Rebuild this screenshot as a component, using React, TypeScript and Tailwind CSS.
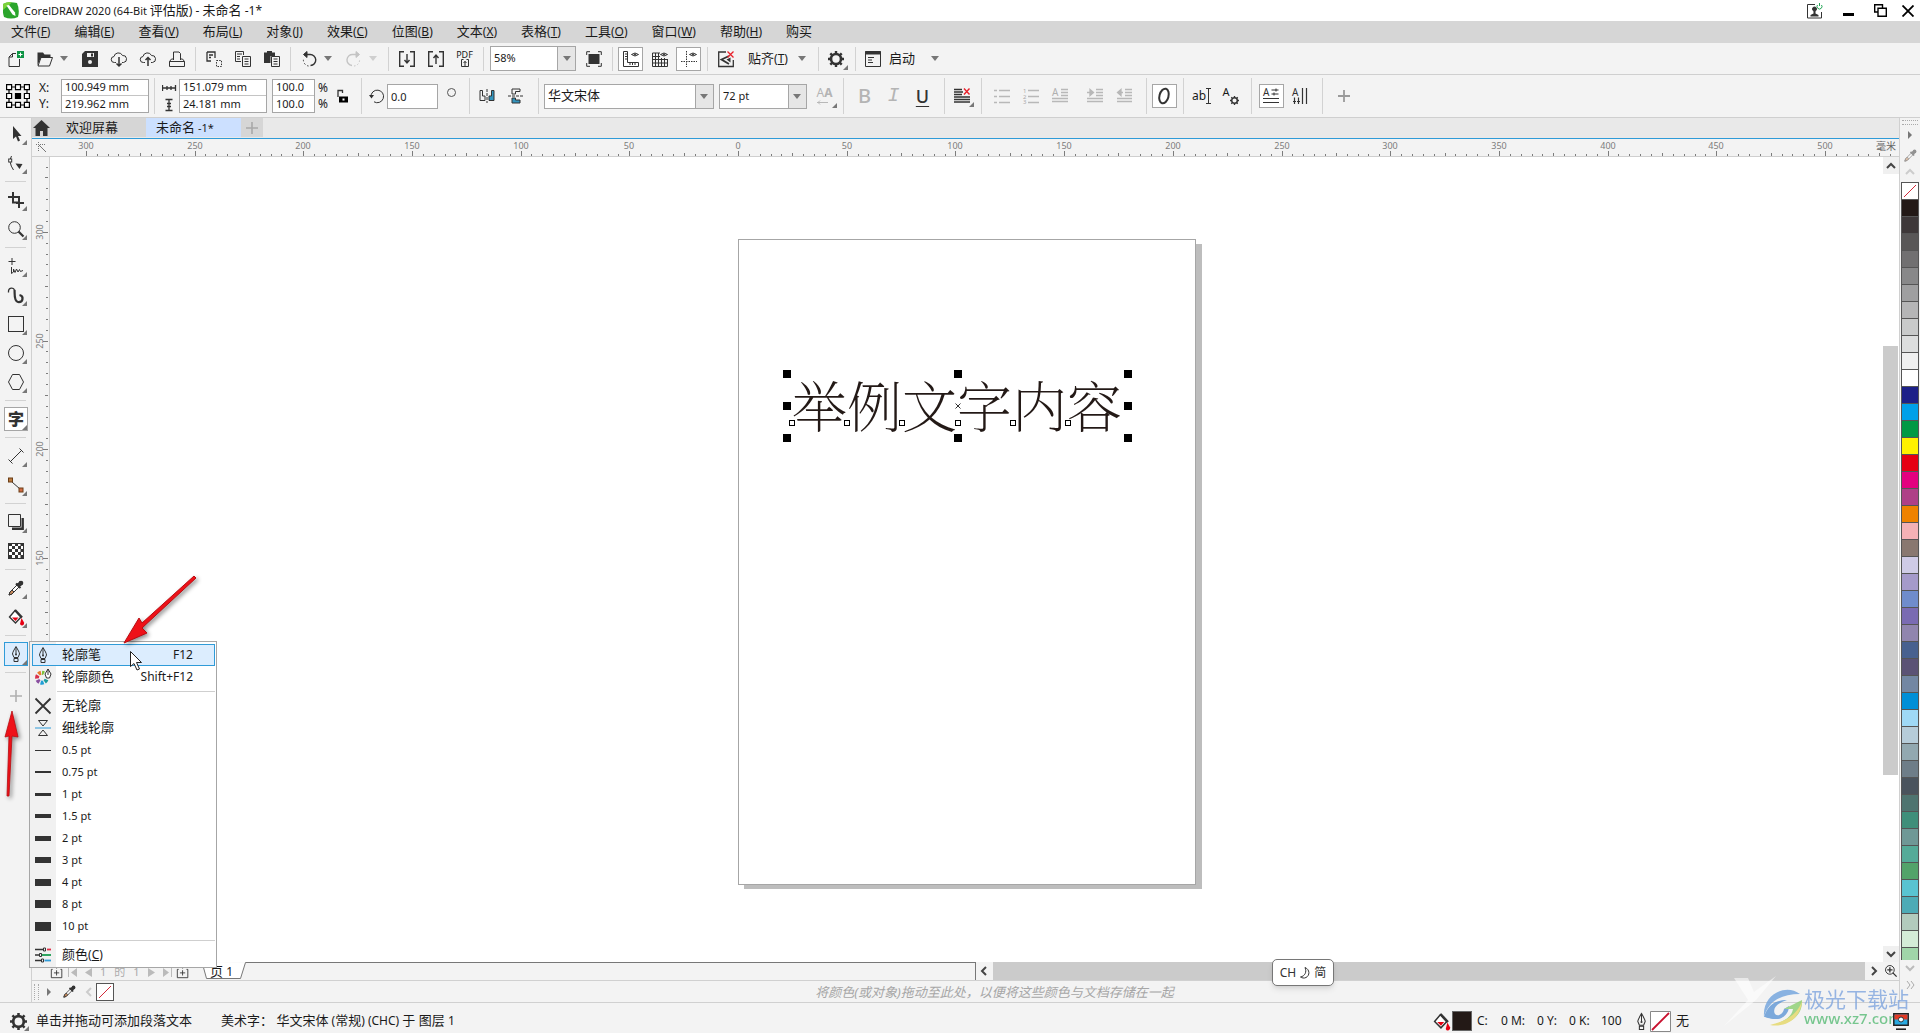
import { useState } from 'react';
import type { ReactNode } from 'react';
import clsx from 'clsx';

const INK = '#333333';

function Svg({ children, size = 16, className }: { children: ReactNode; size?: number; className?: string }) {
  return (
    <svg width={size} height={size} viewBox="0 0 16 16" fill="none" stroke={INK} strokeWidth="1" className={clsx('shrink-0 overflow-visible', className)} aria-hidden="true">
      {children}
    </svg>
  );
}

const penNib = (
  <>
    <path d="M8 .5 C6 4 4.500 6.500 4.500 8 L6 11.500 H10 L11.500 8 C11.500 6.500 10 4 8 .5Z" />
    <path d="M8 1v7" />
    <circle cx="8" cy="8.500" r="1" fill={INK} stroke="none" />
    <path d="M6 12.500h4v3H6z" />
  </>
);

const dropper = (
  <>
    <path d="M1 15 L2 12 L9 5 L11 7 L4 14 Z" fill="#fff" />
    <path d="M1 15 L2 12 L4 10 L6 12 L4 14 Z" fill="#c98a5a" />
    <path d="M8 3.500 L12.500 8 M9.500 5 L12 2.500 L13.500 4 L11 6.500Z" stroke={INK} strokeWidth="2" />
    <circle cx="13" cy="3" r="2.300" fill={INK} stroke="none" />
  </>
);

const bucket = (
  <>
    <path d="M7 1.500 L13 8 L7.500 14 L1.500 8 Z" fill="#fff" strokeWidth="1.400" />
    <path d="M7 1 L14 8.500" strokeWidth="2.400" />
    <path d="M4 8.500h6.500L7.500 12z" fill="#e60012" stroke="none" />
    <path d="M13.500 9 L16 13.500 a2 2 0 0 1 -4 1.500z" fill="#e60012" stroke="none" />
  </>
);

const gear = (
  <>
    <circle cx="8" cy="8" r="5" strokeWidth="2.600" />
    <path d="M8 0v3M8 13v3M0 8h3M13 8h3M2.300 2.300l2 2M11.700 11.700l2 2M13.700 2.300l-2 2M4.300 11.700l-2 2" strokeWidth="2.400" />
  </>
);

const eye = (
  <>
    <path d="M8.500 3.500 Q12 .5 15.500 3.500 Q12 6.500 8.500 3.500Z" />
    <circle cx="12" cy="3.500" r="1" fill={INK} stroke="none" />
  </>
);

const icons = {
  new: (
    <>
      <path d="M8 2.500H4.500L1 6v9.500h10.500V8" />
      <path d="M4.500 2.500V6H1" />
      <rect x="9" y="0" width="7" height="7" fill="#0d9444" stroke="none" />
      <path d="M12.500 1.500v4M10.500 3.500h4" stroke="#fff" />
    </>
  ),
  open: (
    <>
      <path d="M1 15 L4 6.500 H15.500 L12.500 15Z" />
      <path d="M.5 14.500V1.500h5.500l1.500 2H13.500v3H4z" fill={INK} stroke="none" />
    </>
  ),
  save: (
    <>
      <path d="M0 3 L3 0 H16 V16 H0Z" fill={INK} stroke="none" />
      <rect x="5" y="2" width="7" height="4" fill="#f3f3f3" stroke="none" />
      <rect x="9" y="2.500" width="2" height="3" fill={INK} stroke="none" />
      <circle cx="8" cy="11" r="2" fill="#f3f3f3" stroke="none" />
    </>
  ),
  cloudDown: (
    <>
      <path d="M5 11.500H3.500a3 3 0 0 1 -.5-6 A4.500 4.500 0 0 1 11.500 4.500 A3.500 3.500 0 0 1 12.500 11.500H11" />
      <path d="M8 6v9M5.500 12.500L8 15l2.500-2.500" strokeWidth="1.500" />
    </>
  ),
  cloudUp: (
    <>
      <path d="M5 11.500H3.500a3 3 0 0 1 -.5-6 A4.500 4.500 0 0 1 11.500 4.500 A3.500 3.500 0 0 1 12.500 11.500H11" />
      <path d="M8 15V6.500M5.500 9L8 6.500l2.500 2.500" strokeWidth="1.500" />
    </>
  ),
  print: (
    <>
      <path d="M4.500 9V1H10l1.500 1.500V9" />
      <path d="M4.500 8H2.500L.5 10.500v5h15v-5L13.500 8h-2M.5 10.500h15" />
    </>
  ),
  cut: (
    <>
      <path d="M1 1h8v6M1 1v9h4M3 4h4M3 6.500h2" strokeWidth="1.300" />
      <path d="M10.500 9.500h5v6h-5z" strokeDasharray="1.500 1.200" />
    </>
  ),
  copy: (
    <>
      <path d="M6 10.500H.5V.5h8V4M2 3h5M2 5.500h3M2 8h3" />
      <path d="M7.500 5.500h8v10h-8zM9.500 8h4M9.500 10.500h4M9.500 13h4" />
    </>
  ),
  paste: (
    <>
      <path d="M0 1.500h3V0h5v1.500h3V5H6.500v7H0z" fill={INK} stroke="none" />
      <path d="M7.500 5.500h8v10h-8zM9.500 8h4M9.500 10.500h4M9.500 13h4" />
    </>
  ),
  undo: (
    <>
      <path d="M4 3.500 H9 A5.500 5.500 0 0 1 9.500 14.500" strokeWidth="1.400" />
      <path d="M7.500 15 A6 6 0 0 1 2.500 8" strokeDasharray="1.500 2" />
      <path d="M6 .5L2.500 3.500 6 6.500z" fill={INK} />
    </>
  ),
  redo: (
    <g stroke="#c4c4c4">
      <path d="M11.500 3.500 H7 A5.500 5.500 0 0 0 6 14.500" strokeWidth="1.400" />
      <path d="M8 15 A6 6 0 0 0 13.500 8" strokeDasharray="1.500 2" />
      <path d="M10 .5L13.500 3.500 10 6.500z" fill="#c4c4c4" />
    </g>
  ),
  import: <path d="M5 .7H.7v14.600H5M11 .7h4.300v14.600H11M8 3v9M5.500 9L8 12l2.500-3" strokeWidth="1.400" />,
  export: <path d="M5 .7H.7v14.600H5M11 .7h4.300v14.600H11M8 13V4M5.500 7L8 4l2.500 3" strokeWidth="1.400" />,
  fullscreen: (
    <>
      <rect x="2.500" y="3" width="11" height="10" fill={INK} stroke="none" />
      <path d="M4 .7H.7V4M12 .7h3.300V4M4 15.300H.7V12M12 15.300h3.300V12" />
    </>
  ),
  rulers: (
    <>
      <path d="M.5.5h4v11h11v4H.5zM2 3h2M2 5.500h2M2 8h2M7 14v-2M9.500 14v-2M12 14v-2" />
      {eye}
    </>
  ),
  grid: (
    <>
      <path d="M.5 2v13.500h15V8M.5 2H8M3.500 2v13.500M6.500 2v13.500M9.500 7v8.500M12.500 7v8.500M.5 5.500H8M.5 8.500h15M.5 12h15" />
      {eye}
    </>
  ),
  guides: (
    <>
      <path d="M5.500 0v16M0 10.500h16" strokeDasharray="1.500 1" />
      {eye}
    </>
  ),
  snapOff: (
    <>
      <path d="M8 1H.7v14.500h14.600V9" strokeWidth="1.300" />
      <path d="M11 5L3.500 8.500 11 13" strokeWidth="1.800" />
      <path d="M8.500 8.500l4-2v5z" fill={INK} stroke="none" />
      <path d="M9.500.5l6 6M15.500.5l-6 6" stroke="#e8202a" strokeWidth="1.300" />
    </>
  ),
  gear,
  launch: (
    <>
      <path d="M.5.5h15v15H.5z" />
      <path d="M0 2h16" strokeWidth="3" />
      <path d="M3 6.500h6M3 9h4M3 11.500h5" />
    </>
  ),
  lock: (
    <>
      <path d="M4 9V2.500h4.500V5" strokeWidth="1.300" />
      <rect x="5" y="8.500" width="9" height="6" fill="#000" stroke="none" />
      <rect x="8.500" y="10.500" width="2" height="2" fill="#fff" stroke="none" />
    </>
  ),
  rotate: (
    <>
      <path d="M2 9 A6.300 6.300 0 1 1 5 13.800" />
      <path d="M0 7h5L2.500 10.500z" fill={INK} stroke="none" />
    </>
  ),
  mirrorH: (
    <>
      <path d="M1 2.500h2.500v5.500H6v4.500H1z" />
      <path d="M8 1v14" strokeDasharray="3 1" />
      <path d="M15 2.500h-2.500v5.500H10v4.500h5z" fill="#3394bd" />
    </>
  ),
  mirrorV: (
    <>
      <path d="M12 1H4v5h3.500V3.500H12z" />
      <path d="M0 8h16" strokeDasharray="3 1" />
      <path d="M4 10v5h8v-3H7.500v-2z" fill="#3394bd" />
    </>
  ),
  align: (
    <>
      <path d="M0 1.500h8M0 4h9M0 6.500h8M0 9h16M0 11.500h16M0 14h16" strokeWidth="1.500" />
      <path d="M10 .5l5.500 6M15.500.5l-5.500 6" stroke="#e8202a" strokeWidth="1.400" />
    </>
  ),
  bullets: <path d="M0 2.500h3M0 8.500h3M0 14.500h3M5 2.500h11M5 8.500h11M5 14.500h11" stroke="#b8b8b8" strokeWidth="1.400" />,
  numbers: (
    <>
      <path d="M5 2.500h11M5 8.500h11M5 14.500h11" stroke="#b8b8b8" strokeWidth="1.400" />
      <g fontSize="6" fill="#aaa" stroke="none">
        <text x="0" y="5">1</text>
        <text x="0" y="10.500">2</text>
        <text x="0" y="16">3</text>
      </g>
    </>
  ),
  dropCap: (
    <>
      <path d="M9 1.500h7M9 4.500h7M9 7.500h7M0 10.500h16M0 13.500h16" stroke="#b8b8b8" strokeWidth="1.300" />
      <text x="0" y="8" fontSize="10" fill="#b0b0b0" stroke="none">A</text>
    </>
  ),
  indent: (
    <g stroke="#b8b8b8" strokeWidth="1.300">
      <path d="M9 1.500h7M9 4.500h7M9 7.500h7M0 10.500h16M0 13.500h16" />
      <path d="M0 4.500h6M3 1.500l3.500 3L3 7.500z" fill="#b8b8b8" />
    </g>
  ),
  outdent: (
    <g stroke="#b8b8b8" strokeWidth="1.300">
      <path d="M9 1.500h7M9 4.500h7M9 7.500h7M1 10.500h15M1 13.500h15" />
      <path d="M7 4.500H2M5 1.500l-3.500 3 3.500 3z" fill="#b8b8b8" />
    </g>
  ),
  openType: <ellipse cx="8" cy="8" rx="4.500" ry="7.500" transform="rotate(15 8 8)" strokeWidth="2" />,
  horizontal: (
    <>
      <text x="0" y="8" fontSize="10" fill={INK} stroke="none">A</text>
      <path d="M8.500 2h7M8.500 6h7M0 10.500h16M0 14.500h16" strokeWidth="1.200" />
      <path d="M13 .5v3M11 4.500v3" />
    </>
  ),
  vertical: (
    <>
      <text x="0" y="8" fontSize="10" fill={INK} stroke="none">A</text>
      <path d="M2.500 9.500V16M6.500 9.500V16M10.500 0v16M14.500 0v16" strokeWidth="1.200" />
      <path d="M1 13.500h3M5 13.500h3" />
    </>
  ),
  pick: <path d="M5 0v13l3-2.500 2 5 2-1-2-4.500h3.500z" fill={INK} stroke="none" />,
  shape: (
    <>
      <path d="M3.500 1 Q0 7 5.500 15" />
      <rect x=".7" y="4" width="3" height="3" fill="#fff" />
      <path d="M7.500 8.500l7 .5-3 5z" fill={INK} stroke="none" />
    </>
  ),
  crop: <path d="M5 0v10.500h3M0 5h5M8 5h3v11M8 11h8M5 5h5M6 10.500h5" strokeWidth="2" />,
  zoom: (
    <>
      <circle cx="6.500" cy="6.500" r="5.800" />
      <path d="M10.500 10.500l5 5" strokeWidth="2.200" />
    </>
  ),
  freehand: (
    <>
      <path d="M4 0v7M.5 3.500h7" />
      <path d="M3.500 9v6.500l2-1.500v-3l1.500 3.500 1.500-3.500 1.500 3 1.500-2.500 1 2 2.500-1" />
    </>
  ),
  artistic: (
    <>
      <path d="M.5 5.500C0 0 6 0 6.500 3.500" strokeWidth="1.300" />
      <path d="M6.500 3C7 6 5.500 14 10 15 15.500 15.500 16 9 11.500 8" strokeWidth="2.200" />
    </>
  ),
  rect: <rect x=".5" y=".5" width="15" height="15" />,
  ellipse: <circle cx="8" cy="8" r="7.500" />,
  polygon: <path d="M4.500 .5h7L15.500 8l-4 7.500h-7L.5 8z" />,
  text: <text x="8" y="14" fontSize="16" fontWeight="900" textAnchor="middle" fill={INK} stroke="none">字</text>,
  dimension: <path d="M2.500 13.500L13.500 2.500M.5 11.500l4 4M11.500.5l4 4" />,
  connector: (
    <>
      <path d="M4 5l8 7" />
      <rect x=".5" y="1" width="4" height="4" fill="#b9793f" stroke="#6b3e16" />
      <rect x="11" y="11" width="4" height="4" fill="#d06a44" stroke="#6b3e16" />
    </>
  ),
  shadow: (
    <>
      <path d="M.5.500h12v12H.5z" />
      <path d="M14.700 4v10.700H4" strokeWidth="2.400" />
    </>
  ),
  transparency: (
    <>
      <rect x=".5" y=".5" width="15" height="15" fill="#fff" />
      <path d="M2.500 0v16M8.500 0v16M14 0v16" stroke={INK} strokeWidth="3" strokeDasharray="3 3" />
      <path d="M5.500 3v13M11.500 3v13" stroke={INK} strokeWidth="3" strokeDasharray="3 3" />
    </>
  ),
  dropper,
  bucket,
  penNib,
  colorPen: (
    <>
      <g strokeWidth="4">
        <path d="M6 3.800A5 5 0 0 0 3.500 5.200" stroke="#e8792b" />
        <path d="M2.700 6.200A5 5 0 0 0 2 9.500" stroke="#d9304b" />
        <path d="M2.500 10.800A5 5 0 0 0 4.500 13" stroke="#8a4fa0" />
        <path d="M5.600 13.500A5 5 0 0 0 8.600 13.400" stroke="#1f9fd8" />
        <path d="M9.700 12.800A5 5 0 0 0 11.500 10.500" stroke="#1a9c9c" />
        <path d="M7 3.700A5 5 0 0 1 9 4.300" stroke="#7bbf3a" />
      </g>
      <path d="M13 0L10 5l1.500 4h3L16 5z" fill="#fff" />
      <path d="M13 0v6" />
    </>
  ),
  none: <path d="M.5.5l15 15M15.500.5l-15 15" strokeWidth="1.800" />,
  hairline: (
    <>
      <path d="M3.500.5h9L8 6zM3.500 15.500h9L8 10z" />
      <path d="M0 8h16" stroke="#2f9bd8" />
    </>
  ),
  sliders: (
    <>
      <path d="M0 2.500h8M0 8h4M0 13.500h6" strokeWidth="1.600" />
      <path d="M12 2.500h4" stroke="#e0304a" strokeWidth="1.800" />
      <path d="M7 8h9" stroke="#1a9c50" strokeWidth="1.800" />
      <path d="M9.500 13.500H16" stroke="#2f9bd8" strokeWidth="1.800" />
      <path d="M8.500 1h2v3h-2zM4.500 6.500h2v3h-2zM6.500 12h2v3h-2z" />
    </>
  ),
  addPage: (
    <>
      <path d="M3 5H1.500v9.500h12V5H12M7.500 1v3" strokeWidth="1" />
      <path d="M7.500 6v6M4.500 9h6" />
    </>
  ),
};

type IconName = keyof typeof icons;

function Separator({ tall = false }: { tall?: boolean }) {
  return <span className={clsx('ml-1 mr-[3px] w-px shrink-0 bg-[#d2d2d2]', tall ? 'h-9' : 'h-6')} />;
}

function ToolButton({ icon, label, active = false, flyout = false }: { icon: IconName; label: string; active?: boolean; flyout?: boolean }) {
  return (
    <button
      type="button"
      aria-label={label}
      className={clsx('relative mx-[2px] flex h-6 w-[25px] shrink-0 items-center justify-center border', active ? 'border-[#a6a6a6] bg-white' : 'border-transparent')}
    >
      <Svg>{icons[icon]}</Svg>
      {flyout && <Flyout />}
    </button>
  );
}

function LetterButton({ label, className, children }: { label: string; className: string; children: ReactNode }) {
  return (
    <button type="button" aria-label={label} className={clsx('relative mx-[2px] flex h-6 w-[25px] shrink-0 items-center justify-center leading-none', className)}>
      {children}
    </button>
  );
}

function Flyout() {
  return (
    <svg width="5" height="5" viewBox="0 0 5 5" className="absolute bottom-0 right-0" aria-hidden="true">
      <path d="M5 0v5H0z" fill="#777" />
    </svg>
  );
}

function Caret({ muted = false }: { muted?: boolean }) {
  return (
    <svg width="8" height="5" viewBox="0 0 8 5" className="shrink-0" aria-hidden="true">
      <path d="M0 0h8L4 5z" fill={muted ? '#cfcfcf' : '#777'} />
    </svg>
  );
}

function CaretButton({ label, muted = false }: { label: string; muted?: boolean }) {
  return (
    <button type="button" aria-label={label} className="flex h-6 w-4 shrink-0 items-center pl-px">
      <Caret muted={muted} />
    </button>
  );
}

function Combo({ label, value, className }: { label: string; value: string; className: string }) {
  return (
    <div className={clsx('relative flex h-[25px] shrink-0 border border-[#a6a6a6] bg-white', className)}>
      <select aria-label={label} defaultValue={value} className="w-full appearance-none bg-transparent pl-[3px]">
        <option>{value}</option>
      </select>
      <span className="pointer-events-none absolute inset-y-0 right-0 flex w-[18px] items-center justify-center border-l border-[#a6a6a6] bg-[#e6e6e6]">
        <Caret />
      </span>
    </div>
  );
}

function FieldPair({ labels, values, className }: { labels: string[]; values: string[]; className: string }) {
  return (
    <div className={clsx('flex shrink-0 flex-col border border-[#a6a6a6] bg-white text-[11px]', className)}>
      {values.map((value, i) => (
        <input key={labels[i]} aria-label={labels[i]} defaultValue={value} className={clsx('h-4 w-full px-[3px] outline-none', i === 0 && 'border-b border-[#c4c4c4]')} />
      ))}
    </div>
  );
}

const menus = [
  ['文件', 'F'], ['编辑', 'E'], ['查看', 'V'], ['布局', 'L'], ['对象', 'J'], ['效果', 'C'], ['位图', 'B'],
  ['文本', 'X'], ['表格', 'T'], ['工具', 'O'], ['窗口', 'W'], ['帮助', 'H'], ['购买', ''],
];

function Mnemonic({ text, letter }: { text: string; letter: string }) {
  return (
    <>
      {text}
      {letter && <span className="text-[12px]">(<u>{letter}</u>)</span>}
    </>
  );
}

function TitleBar() {
  return (
    <header className="flex h-[21px] shrink-0 items-center bg-white pl-[3px] pr-[6px]">
      <svg width="16" height="17" viewBox="0 0 16 17" aria-hidden="true">
        <path d="M0 2Q5-1 14 1 17 8 15 15 8 18 1 15-1 8 0 2z" fill="#2ba52c" />
        <path d="M0 8Q-.5 4 0 2 5-1 9 .5z" fill="#7bd13b" />
        <path d="M3.500 3.500l6 9 3 1.500-.5-3.500-6-7.500z" fill="#fff" />
      </svg>
      <h1 className="ml-[5px] text-[13px] leading-5">
        <span className="text-[11px]">CorelDRAW 2020 (64-Bit </span>评估版<span className="text-[12px]">) - </span>未命名<span className="text-[12px]"> -1*</span>
      </h1>
      <div className="ml-auto flex items-center">
        <button type="button" aria-label="登录" className="mr-[20px]">
          <Svg>
            <path d="M8 1.500H.5v13.500h14V9" />
            <circle cx="7.500" cy="6" r="2" fill={INK} />
            <path d="M6.500 8h2v2.500l3 1.500v1.500h-8V12l3-1.500z" fill={INK} stroke="none" />
            <path d="M10.500 2a2.500 2.500 0 1 0 4 0M12.500 0v3" stroke="#27a85a" />
          </Svg>
        </button>
        <button type="button" aria-label="最小化" className="mr-[20px] mt-2 h-[3px] w-[11px] bg-black" />
        <button type="button" aria-label="还原" className="mr-[15px]">
          <svg width="13" height="13" viewBox="0 0 13 13" fill="none" stroke="#000" strokeWidth="1.400" aria-hidden="true">
            <path d="M4 8H.7V.7H8.500V4M4 4.300h8.300v8H4z" />
          </svg>
        </button>
        <button type="button" aria-label="关闭">
          <svg width="12" height="12" viewBox="0 0 12 12" stroke="#000" strokeWidth="1.800" aria-hidden="true">
            <path d="M.5.5l11 11M11.500.5l-11 11" />
          </svg>
        </button>
      </div>
    </header>
  );
}

function StandardBar() {
  return (
    <div className="flex h-8 shrink-0 items-center border-b border-[#cfcfcf] pl-px">
      <ToolButton icon="new" label="新建" />
      <ToolButton icon="open" label="打开" />
      <CaretButton label="最近文件" />
      <ToolButton icon="save" label="保存" />
      <ToolButton icon="cloudDown" label="从云端打开" />
      <ToolButton icon="cloudUp" label="保存到云端" />
      <ToolButton icon="print" label="打印" />
      <Separator />
      <ToolButton icon="cut" label="剪切" />
      <ToolButton icon="copy" label="复制" />
      <ToolButton icon="paste" label="粘贴" />
      <Separator />
      <ToolButton icon="undo" label="撤销" />
      <CaretButton label="撤销列表" />
      <ToolButton icon="redo" label="重做" />
      <CaretButton label="重做列表" muted />
      <Separator />
      <ToolButton icon="import" label="导入" />
      <ToolButton icon="export" label="导出" />
      <button type="button" className="flex w-[29px] shrink-0 flex-col items-center text-[9px] leading-[9px]">
        PDF
        <svg width="8" height="8" viewBox="0 0 8 8" fill="none" stroke={INK} aria-hidden="true">
          <path d="M2.500.5h-2v7h7v-7h-2M4 7V2M2.500 4L4 2.500 5.500 4" />
        </svg>
      </button>
      <Separator />
      <Combo label="缩放级别" value="58%" className="mx-[3px] w-[86px] text-[11px]" />
      <ToolButton icon="fullscreen" label="全屏预览" />
      <Separator />
      <ToolButton icon="rulers" label="显示标尺" active />
      <ToolButton icon="grid" label="显示网格" />
      <ToolButton icon="guides" label="显示辅助线" active />
      <Separator />
      <ToolButton icon="snapOff" label="关闭贴齐" />
      <button type="button" className="flex shrink-0 items-center gap-[10px] px-2 text-[13px]">
        <span><Mnemonic text="贴齐" letter="T" /></span>
        <Caret />
      </button>
      <Separator />
      <ToolButton icon="gear" label="选项" flyout />
      <Separator />
      <button type="button" className="flex shrink-0 items-center pl-[6px] text-[13px]">
        <Svg>{icons.launch}</Svg>
        <span className="ml-2 mr-4">启动</span>
        <Caret />
      </button>
    </div>
  );
}

function PropertyBar() {
  return (
    <div className="flex h-[43px] shrink-0 items-center border-b border-[#cfcfcf] pl-[6px]">
      <button type="button" aria-label="对象原点" className="mr-[9px] shrink-0">
        <svg width="24" height="24" viewBox="0 0 24 24" fill="#fff" stroke="#000" strokeWidth="1.200" aria-hidden="true">
          <path d="M3 3h18v18H3z" fill="none" />
          <path d="M.600.600h5v5h-5zM9.500.600h5v5h-5zM18.400.600h5v5h-5zM.600 9.500h5v5h-5zM18.400 9.500h5v5h-5zM.600 18.400h5v5h-5zM9.500 18.400h5v5h-5zM18.400 18.400h5v5h-5z" />
          <path d="M9.500 9.500h5v5h-5z" fill="#000" />
        </svg>
      </button>
      <div className="w-[22px] shrink-0 text-[12px] leading-4">
        <div>X:</div>
        <div>Y:</div>
      </div>
      <FieldPair labels={['X 位置', 'Y 位置']} values={['100.949 mm', '219.962 mm']} className="mr-px w-[88px]" />
      <Separator tall />
      <svg width="15" height="34" viewBox="0 0 15 34" fill="none" stroke={INK} className="ml-[4px] mr-[2px] shrink-0" aria-hidden="true">
        <path d="M.5 6v6M13.500 6v6M1 9h12M5 7v4M9 7v4M3.500 20.500h7M3.500 31.500h7M7 21v10M5 24.500h4M5 27.500h4" strokeWidth="1.300" />
      </svg>
      <FieldPair labels={['宽度', '高度']} values={['151.079 mm', '24.181 mm']} className="mr-[5px] w-[88px]" />
      <FieldPair labels={['水平缩放', '垂直缩放']} values={['100.0', '100.0']} className="mr-[3px] w-[43px]" />
      <div className="shrink-0 text-[12px] leading-4">
        <div>%</div>
        <div>%</div>
      </div>
      <ToolButton icon="lock" label="锁定比率" />
      <Separator tall />
      <div className="ml-1 mr-[2px] shrink-0"><Svg>{icons.rotate}</Svg></div>
      <input aria-label="旋转角度" defaultValue="0.0" className="h-[25px] w-[51px] shrink-0 border border-[#a6a6a6] bg-white px-[3px] text-[11px] outline-none" />
      <span className="mx-[9px] mb-2 h-[9px] w-[9px] shrink-0 rounded-full border border-[#555]" />
      <Separator tall />
      <ToolButton icon="mirrorH" label="水平镜像" />
      <ToolButton icon="mirrorV" label="垂直镜像" />
      <div className="w-[3px]" />
      <Separator tall />
      <Combo label="字体" value="华文宋体" className="ml-[2px] w-[170px] text-[13px]" />
      <Combo label="字号" value="72 pt" className="ml-[5px] mr-[3px] w-[88px] text-[11px]" />
      <LetterButton label="字体大小" className="text-[12px] text-[#b4b4b4]">
        <span className="mb-[6px]">A<span className="font-bold">A</span></span>
        <svg width="12" height="5" viewBox="0 0 12 5" fill="none" stroke="#b8b8b8" className="absolute bottom-[3px] left-[5px]" aria-hidden="true"><path d="M0 2.500h11M3 .5l-2 2 2 2" /></svg>
        <Flyout />
      </LetterButton>
      <Separator tall />
      <div className="w-[3px]" />
      <LetterButton label="粗体" className="text-[20px] font-medium text-[#b4b4b4]">B</LetterButton>
      <LetterButton label="斜体" className="font-['Liberation_Mono',monospace] text-[20px] italic text-[#b4b4b4]">I</LetterButton>
      <LetterButton label="下划线" className="text-[18px] font-medium text-[#333] underline decoration-1 underline-offset-3">U</LetterButton>
      <div className="w-[3px]" />
      <Separator tall />
      <ToolButton icon="align" label="文本对齐" flyout />
      <Separator tall />
      <div className="w-[3px]" />
      <ToolButton icon="bullets" label="项目符号列表" />
      <ToolButton icon="numbers" label="编号列表" />
      <ToolButton icon="dropCap" label="首字下沉" />
      <div className="w-[6px]" />
      <ToolButton icon="indent" label="增加缩进量" />
      <ToolButton icon="outdent" label="减少缩进量" />
      <div className="w-[3px]" />
      <Separator tall />
      <ToolButton icon="openType" label="交互式 OpenType" active />
      <Separator tall />
      <button type="button" aria-label="编辑文本" className="flex w-[29px] shrink-0 items-center justify-center text-[12px]">
        ab
        <svg width="5" height="16" viewBox="0 0 5 16" stroke={INK} fill="none" aria-hidden="true">
          <path d="M0 .5h5M0 15.500h5M2.500 1v14" />
        </svg>
      </button>
      <button type="button" aria-label="文本属性" className="flex w-[29px] shrink-0 items-center justify-center text-[11px]">
        <span className="mb-2">A</span>
        <Svg size={9} className="mt-2">{gear}</Svg>
      </button>
      <div className="w-[2px]" />
      <Separator tall />
      <div className="w-[2px]" />
      <ToolButton icon="horizontal" label="水平方向文本" active />
      <ToolButton icon="vertical" label="垂直方向文本" />
      <div className="w-[3px]" />
      <Separator tall />
      <button type="button" aria-label="自定义" className="ml-3">
        <svg width="12" height="12" viewBox="0 0 12 12" stroke="#9a9a9a" strokeWidth="1.800" aria-hidden="true">
          <path d="M6 0v12M0 6h12" />
        </svg>
      </button>
    </div>
  );
}

const toolGroups: { icon: IconName; label: string; flyout?: boolean }[][] = [
  [{ icon: 'pick', label: '选择' }, { icon: 'shape', label: '形状' }],
  [{ icon: 'crop', label: '裁剪' }, { icon: 'zoom', label: '缩放' }],
  [
    { icon: 'freehand', label: '手绘' },
    { icon: 'artistic', label: '艺术笔' },
    { icon: 'rect', label: '矩形' },
    { icon: 'ellipse', label: '椭圆形' },
    { icon: 'polygon', label: '多边形' },
  ],
  [{ icon: 'text', label: '文本' }],
  [{ icon: 'dimension', label: '平行度量' }, { icon: 'connector', label: '连接器' }],
  [{ icon: 'shadow', label: '阴影' }, { icon: 'transparency', label: '透明度', flyout: false }],
  [{ icon: 'dropper', label: '颜色滴管' }, { icon: 'bucket', label: '交互式填充' }],
  [{ icon: 'penNib', label: '轮廓笔' }],
];

const widths = [
  { label: '0.5 pt', bar: 'h-px' },
  { label: '0.75 pt', bar: 'h-[2px]' },
  { label: '1 pt', bar: 'h-[3px]' },
  { label: '1.5 pt', bar: 'h-1' },
  { label: '2 pt', bar: 'h-[5px]' },
  { label: '3 pt', bar: 'h-[6px]' },
  { label: '4 pt', bar: 'h-[7px]' },
  { label: '8 pt', bar: 'h-2' },
  { label: '10 pt', bar: 'h-[9px]' },
];

function MenuRow({ graphic, children, shortcut, active = false }: { graphic: ReactNode; children: ReactNode; shortcut?: string; active?: boolean }) {
  return (
    <button type="button" role="menuitem" className={clsx('flex h-[22px] w-full items-center border pl-[2px] pr-[21px] text-left', active ? 'border-[#2f9bd8] bg-[#dcedfe]' : 'border-transparent')}>
      <span className="flex w-4 justify-center">{graphic}</span>
      <span className="ml-[11px] flex-1 whitespace-nowrap">{children}</span>
      {shortcut && <span className="text-[12px]">{shortcut}</span>}
    </button>
  );
}

function MenuRule() {
  return (
    <div className="flex h-[7px] items-center pl-[25px]">
      <div className="h-px w-full bg-[#cfcfcf]" />
    </div>
  );
}

function OutlineMenu() {
  return (
    <div role="menu" className="absolute left-[29px] top-[2px] z-20 w-[188px] border border-[#a6a6a6] bg-linear-to-r from-[#f1f1f1] from-[26px] to-white to-[26px] p-px pl-[2px] pt-[2px] text-[13px]">
      <MenuRow graphic={<Svg>{penNib}</Svg>} shortcut="F12" active>轮廓笔</MenuRow>
      <MenuRow graphic={<Svg>{icons.colorPen}</Svg>} shortcut="Shift+F12">轮廓颜色</MenuRow>
      <MenuRule />
      <MenuRow graphic={<Svg>{icons.none}</Svg>}>无轮廓</MenuRow>
      <MenuRow graphic={<Svg>{icons.hairline}</Svg>}>细线轮廓</MenuRow>
      {widths.map((w) => (
        <MenuRow key={w.label} graphic={<span className={clsx('w-4 bg-[#333]', w.bar)} />}>
          <span className="text-[11px]">{w.label}</span>
        </MenuRow>
      ))}
      <MenuRule />
      <MenuRow graphic={<Svg>{icons.sliders}</Svg>}><Mnemonic text="颜色" letter="C" /></MenuRow>
    </div>
  );
}

function Toolbox() {
  const [tool, setTool] = useState('text');

  return (
    <aside className="relative flex w-8 shrink-0 flex-col border-r border-[#d0d0d0] pt-px">
      {toolGroups.map((group, i) => (
        <div key={i} className="shrink-0">
          {i > 0 && <div className="mx-[5px] flex h-2 items-center"><div className="h-px w-full bg-[#d2d2d2]" /></div>}
          {group.map((item) => (
            <div key={item.icon} className="relative flex h-[29px] items-center pl-1">
              <button
                type="button"
                aria-label={item.label}
                onClick={() => setTool(item.icon)}
                className={clsx(
                  'relative flex h-6 w-6 items-center justify-center border',
                  item.icon === 'penNib' ? 'border-[#2f9bd8] bg-[#dcedfe]' : tool === item.icon ? 'border-[#a6a6a6] bg-white' : 'border-transparent',
                )}
              >
                <Svg>{icons[item.icon]}</Svg>
                {item.flyout !== false && <Flyout />}
              </button>
              {item.icon === 'penNib' && <OutlineMenu />}
            </div>
          ))}
        </div>
      ))}
      <div className="mx-[5px] mt-1 h-px bg-[#d2d2d2]" />
      <button type="button" aria-label="自定义工具箱" className="ml-[10px] mt-[17px] w-3">
        <svg width="12" height="12" viewBox="0 0 12 12" stroke="#b0b0b0" strokeWidth="1.600" aria-hidden="true">
          <path d="M6 0v12M0 6h12" />
        </svg>
      </button>
    </aside>
  );
}

const STEP = 10.87;

// Scale marks run every 5 mm, with a number at each 50 mm.
function Ruler({ vertical = false, origin, from, to }: { vertical?: boolean; origin: number; from: number; to: number }) {
  const marks = [];
  for (let n = from; n <= to; n += 1) marks.push(n);
  return (
    <svg className={vertical ? 'h-full w-full' : 'h-full min-w-0 flex-1'} fontSize="9" fontFamily="'Noto Sans', sans-serif" fill="#7c7c7c" stroke="none" role="img" aria-label={vertical ? '垂直标尺' : '水平标尺'}>
      {marks.map((n) => {
        const p = Math.round(origin + n * STEP);
        const major = n % 10 === 0;
        const len = major ? 5 : n % 5 === 0 ? 3 : 2;
        return (
          <g key={n}>
            {vertical ? <rect x={16 - len} y={p} width={len} height="1" /> : <rect x={p} y={17 - len} width="1" height={len} />}
            {major && (
              <text textAnchor="middle" transform={vertical ? `translate(11 ${p}) rotate(-90)` : `translate(${p} 10)`}>
                {Math.abs(n * 5)}
              </text>
            )}
          </g>
        );
      })}
    </svg>
  );
}

const handles = [
  'left-[783px] top-[370px]', 'left-[954px] top-[370px]', 'left-[1124px] top-[370px]',
  'left-[783px] top-[402px]', 'left-[1124px] top-[402px]',
  'left-[783px] top-[434px]', 'left-[954px] top-[434px]', 'left-[1124px] top-[434px]',
];
const nodes = ['left-[789px]', 'left-[844px]', 'left-[899px]', 'left-[955px]', 'left-[1010px]', 'left-[1065px]'];

function Canvas() {
  return (
    <div className="relative min-w-0 flex-1 overflow-hidden bg-white">
      <div className="absolute -left-[50px] -top-[157px]">
        <div className="absolute left-[744px] top-[244px] h-[645px] w-[458px] bg-[#bdbdbd]" />
        <div className="absolute left-[738px] top-[239px] h-[646px] w-[458px] border border-[#a6a6a6] bg-white" />
        <p className="absolute left-[792px] top-[369px] whitespace-nowrap font-['Noto_Serif_CJK_SC','Noto_Sans_CJK_SC',serif] text-[55px] font-extralight leading-[70px] text-[#231916]">举例文字内容</p>
        {handles.map((pos) => <span key={pos} className={clsx('absolute h-2 w-2 bg-black', pos)} />)}
        {nodes.map((pos) => <span key={pos} className={clsx('absolute top-[420px] h-[6px] w-[6px] border border-black bg-white', pos)} />)}
        <svg width="6" height="6" viewBox="0 0 6 6" stroke="#333" className="absolute left-[955px] top-[403px]" aria-hidden="true">
          <path d="M.5.5l5 5M5.500.5l-5 5" />
        </svg>
      </div>
    </div>
  );
}

function Chevron({ dir, color = '#444' }: { dir: 'up' | 'down' | 'left' | 'right'; color?: string }) {
  const d = { up: 'M1 7l4-4 4 4', down: 'M1 3l4 4 4-4', left: 'M7 1L3 5l4 4', right: 'M3 1l4 4-4 4' }[dir];
  return (
    <svg width="10" height="10" viewBox="0 0 10 10" fill="none" stroke={color} strokeWidth="2" className="shrink-0" aria-hidden="true">
      <path d={d} />
    </svg>
  );
}

function PageBar() {
  return (
    <div className="flex h-[19px] shrink-0 items-end border-b border-[#d0d0d0]">
      <div className="flex h-full items-center gap-2 pl-[18px] pr-1 pt-[2px] text-[11px] leading-4 text-[#aaa]">
        <Svg size={14} className="-mr-1">{icons.addPage}</Svg>
        <svg width="9" height="9" viewBox="0 0 9 9" fill="#bbb" aria-hidden="true"><path d="M0 0h1v9H0zM9 0v9L3 4.500z" /></svg>
        <svg width="7" height="9" viewBox="0 0 7 9" fill="#bbb" aria-hidden="true"><path d="M7 0v9L0 4.500z" /></svg>
        <span>1</span>
        <span>的</span>
        <span>1</span>
        <svg width="7" height="9" viewBox="0 0 7 9" fill="#bbb" aria-hidden="true"><path d="M0 0v9l7-4.500z" /></svg>
        <svg width="9" height="9" viewBox="0 0 9 9" fill="#bbb" aria-hidden="true"><path d="M8 0h1v9H8zM0 0v9l6-4.500z" /></svg>
        <Svg size={14} className="-ml-1">{icons.addPage}</Svg>
      </div>
      <button type="button" className="relative ml-2 h-[18px] w-[48px] shrink-0 text-[13px] leading-[18px]">
        <svg width="48" height="18" viewBox="0 0 48 18" className="absolute left-0 top-0" aria-hidden="true">
          <path d="M0 0l4.500 16.500h34L43.500.5H48" fill="#fff" stroke="#777" />
        </svg>
        <span className="relative pr-2">页 <span className="text-[12px]">1</span></span>
      </button>
      <div className="h-[18px] w-[726px] shrink-0 border-r border-t border-[#777]" />
      <button type="button" aria-label="向左滚动" className="flex h-[18px] w-[17px] shrink-0 items-center justify-center"><Chevron dir="left" /></button>
      <div className="h-[18px] min-w-0 flex-1 bg-[#cbcbcb]" />
      <button type="button" aria-label="向右滚动" className="flex h-[18px] w-[18px] shrink-0 items-center justify-center"><Chevron dir="right" /></button>
      <button type="button" aria-label="导航器" className="flex h-[18px] w-4 shrink-0 items-center justify-center">
        <Svg size={12}>
          <circle cx="6.500" cy="6.500" r="5.800" strokeWidth="1.300" />
          <path d="M6.500 3v7M3 6.500h7M10.500 10.500l5 5" strokeWidth="1.800" />
        </Svg>
      </button>
    </div>
  );
}

function NoColor({ className }: { className: string }) {
  return (
    <button type="button" aria-label="无填充" className={clsx('shrink-0 border border-[#555] bg-white', className)}>
      <svg viewBox="0 0 16 16" className="h-full w-full" stroke="#d22a3a" aria-hidden="true">
        <path d="M2 14L14 2" />
      </svg>
    </button>
  );
}

function Workspace() {
  return (
    <section className="flex min-w-0 flex-1 flex-col">
      <div className="flex h-5 shrink-0 border-b border-[#e9e9e9] bg-[#e9e9e9] text-[13px]">
        <button type="button" aria-label="主页" className="flex w-[22px] items-center bg-[#d6d6d6] pl-px">
          <svg width="17" height="16" viewBox="0 0 17 16" aria-hidden="true">
            <path d="M8.500 0L0 8h2.500v8H7v-5h3v5h4.500V8H17z" fill="#333" />
          </svg>
        </button>
        <button type="button" className="w-[92px] bg-[#d6d6d6] pl-3 text-left">欢迎屏幕</button>
        <button type="button" className="w-[95px] bg-[#cce0ff] pl-[10px] text-left">未命名<span className="text-[11px]"> -1*</span></button>
        <button type="button" aria-label="新建文档" className="flex w-[22px] items-center justify-center bg-[#d6d6d6]">
          <svg width="12" height="12" viewBox="0 0 12 12" stroke="#a9a9a9" strokeWidth="1.600" aria-hidden="true"><path d="M6 0v12M0 6h12" /></svg>
        </button>
      </div>
      <div className="relative flex h-[19px] shrink-0 border-b border-t border-b-[#cfcfcf] border-t-[#2f9bd8]">
        <svg width="18" height="17" viewBox="0 0 18 17" stroke="#777" className="shrink-0" aria-hidden="true">
          <path d="M4 5.500h10M6.500 3v10" strokeDasharray="1 1" />
          <path d="M6 5l8 8" />
        </svg>
        <Ruler origin={688} from={-60} to={108} />
        <span className="absolute right-[3px] top-[2px] bg-[#f3f3f3] text-[10px] leading-[10px] text-[#666]">毫米</span>
      </div>
      <div className="flex min-h-0 flex-1">
        <div className="w-[18px] shrink-0 border-r border-[#cfcfcf]">
          <Ruler vertical origin={727} from={-66} to={6} />
        </div>
        <Canvas />
        <div className="flex w-4 shrink-0 flex-col bg-white">
          <button type="button" aria-label="向上滚动" className="flex h-[17px] items-center justify-center bg-[#f0f0f0]"><Chevron dir="up" /></button>
          <div className="flex flex-1 flex-col">
            <div className="flex-[172]" />
            <div className="w-[15px] flex-[430] bg-[#cbcbcb]" />
            <div className="flex-[171]" />
          </div>
          <button type="button" aria-label="向下滚动" className="flex h-4 items-center justify-center bg-[#f0f0f0]"><Chevron dir="down" /></button>
        </div>
      </div>
      <PageBar />
      <div className="flex h-[21px] shrink-0 items-center">
        <span className="ml-[2px] mr-2 h-4 w-[5px] border-x border-dotted border-[#aaa]" />
        <svg width="4" height="8" viewBox="0 0 4 8" fill="#777" aria-hidden="true"><path d="M0 0v8l4-4z" /></svg>
        <button type="button" aria-label="文档滴管" className="ml-3 mr-2"><Svg size={13}>{dropper}</Svg></button>
        <Chevron dir="left" color="#ccc" />
        <NoColor className="ml-[2px] h-[18px] w-[18px]" />
        <p className="flex-1 text-center text-[13px] italic leading-5 text-[#a6a6a6]">将颜色(或对象)拖动至此处，以便将这些颜色与文档存储在一起</p>
        <span className="w-6" />
      </div>
    </section>
  );
}

const swatches = [
  'bg-[#231916]', 'bg-[#3e3839]', 'bg-[#595757]', 'bg-[#717071]', 'bg-[#888889]', 'bg-[#9f9fa0]', 'bg-[#b5b5b6]', 'bg-[#c9caca]',
  'bg-[#dcdddd]', 'bg-[#efefef]', 'bg-[#ffffff]', 'bg-[#1d2088]', 'bg-[#00a0e9]', 'bg-[#009944]', 'bg-[#fff100]', 'bg-[#e60012]',
  'bg-[#e4007f]', 'bg-[#af4087]', 'bg-[#ef8200]', 'bg-[#f4b1b5]', 'bg-[#897870]', 'bg-[#cfcbe6]', 'bg-[#a59aca]', 'bg-[#6f8ccb]',
  'bg-[#7a6bb2]', 'bg-[#9085ae]', 'bg-[#48618f]', 'bg-[#5b5275]', 'bg-[#7387a3]', 'bg-[#008fd7]', 'bg-[#9fd9f6]', 'bg-[#b6ccd9]',
  'bg-[#92a8b0]', 'bg-[#6e7d88]', 'bg-[#4a535d]', 'bg-[#4f7470]', 'bg-[#3f8f7a]', 'bg-[#6f9896]', 'bg-[#54ab98]', 'bg-[#53a36a]',
  'bg-[#59c3d1]', 'bg-[#4dabb6]', 'bg-[#b2cbbd]', 'bg-[#d4ebd7]', 'bg-[#a0d5a9]',
];

function Palette() {
  return (
    <aside className="flex w-[21px] shrink-0 flex-col items-center border-l border-[#d0d0d0]">
      <span className="mt-[2px] h-[5px] w-4 shrink-0 border-y border-dotted border-[#aaa]" />
      <svg width="4" height="8" viewBox="0 0 4 8" fill="#777" className="mt-[6px] shrink-0" aria-hidden="true"><path d="M0 0v8l4-4z" /></svg>
      <button type="button" aria-label="滴管" className="mb-[5px] mt-[10px] opacity-50"><Svg size={13}>{dropper}</Svg></button>
      <Chevron dir="up" color="#ccc" />
      <NoColor className="mt-[5px] h-[18px] w-[18px]" />
      <div className="min-h-0 w-[18px] flex-1 overflow-hidden border-x border-[#555]">
        {swatches.map((color) => (
          <button key={color} type="button" aria-label={color.slice(4, -1)} className={clsx('block h-[17px] w-full border-b border-[#555]', color)} />
        ))}
      </div>
      <div className="flex h-[42px] shrink-0 flex-col items-center gap-2 pt-[3px]">
        <Chevron dir="down" color="#bbb" />
        <svg width="9" height="8" viewBox="0 0 9 8" fill="none" stroke="#aaa" aria-hidden="true"><path d="M1 0l3 4-3 4M5 0l3 4-3 4" /></svg>
      </div>
    </aside>
  );
}

function StatusBar() {
  return (
    <footer className="flex h-[31px] shrink-0 items-center border-t border-[#d0d0d0] pl-[10px] pr-[11px] pt-[6px] text-[13px]">
      <button type="button" aria-label="状态栏选项" className="relative flex h-5 w-[19px] items-center">
        <Svg size={17}>{gear}</Svg>
        <Flyout />
      </button>
      <span className="ml-[7px] whitespace-nowrap">单击并拖动可添加段落文本</span>
      <span className="ml-[29px] whitespace-nowrap">
        美术字： 华文宋体<span className="text-[12px]"> (</span>常规<span className="text-[12px]">) (CHC) </span>于 图层 <span className="text-[12px]">1</span>
      </span>
      <div className="ml-auto flex items-center text-[12px]">
        <Svg size={17}>{bucket}</Svg>
        <span className="ml-[2px] mr-[5px] h-5 w-5 border border-[#666] bg-[#231916]" />
        <span className="w-6">C:</span>
        <span className="w-9">0 M:</span>
        <span className="w-8">0 Y:</span>
        <span className="w-8">0 K:</span>
        <span className="w-8">100</span>
        <Svg size={17}>{penNib}</Svg>
        <svg width="21" height="21" viewBox="0 0 21 21" className="mr-[5px]" aria-hidden="true">
          <path d="M.5.5h20v20H.5z" fill="#fff" stroke="#888" />
          <path d="M2 19L19 2" stroke="#c8102e" strokeWidth="1.800" />
        </svg>
        <span className="w-[217px] text-[13px]">无</span>
        <svg width="16" height="17" viewBox="0 0 16 17" className="relative z-20" aria-hidden="true">
          <path d="M.8.800h14.400v11.400H.8z" fill="#29a9e0" stroke="#222" strokeWidth="1.500" />
          <path d="M1.500 1.500h13v5h-13z" fill="#e43a24" />
          <circle cx="8" cy="6.500" r="2.500" fill="#fff" stroke="#333" />
          <path d="M3 16.200h10" stroke="#222" strokeWidth="1.600" />
        </svg>
      </div>
    </footer>
  );
}

function Watermark() {
  return (
    <div className="pointer-events-none absolute bottom-[5px] right-[11px] z-10 flex items-center opacity-80">
      <svg width="80" height="52" viewBox="0 0 80 52" className="absolute -left-[38px] -top-[10px]" aria-hidden="true">
        <path d="M12 2h14l6 14L54 0 34 24 2 50l24-26z" fill="#fff" opacity=".7" />
      </svg>
      <svg width="44" height="42" viewBox="0 0 44 42" fill="none" className="relative" aria-hidden="true">
        <path d="M40 8C26-3 2 8 4 31 8 16 20 8 40 8z" fill="#6fa3dd" />
        <path d="M4 31C8 18 16 14 27 14c-10 3-15 9-12 14 3 3 8 0 9-5l5-3c0 8-7 14-14 13-6 0-9-2-11-2z" fill="#5f97d6" />
        <path d="M24 23l18-9c1 14-10 24-26 24 9-3 16-8 17-15z" fill="#8ccf6f" />
        <path d="M10 39c16 3 31-7 32-24-4 12-14 20-32 24z" fill="#e5d765" />
      </svg>
      <div className="relative leading-none">
        <div className="text-[21px] leading-[22px] text-[#7fa5de]">极光下载站</div>
        <div className="text-[15px] font-medium leading-4 text-[#58bb76]">www.xz7.com</div>
      </div>
    </div>
  );
}

function Annotations() {
  return (
    <svg width="220" height="820" viewBox="0 0 220 820" className="pointer-events-none absolute left-0 top-0 z-30" aria-hidden="true">
      <g className="drop-shadow-[2px_2px_2px_rgba(0,0,0,0.45)]">
        <path d="M194 576l2 2-54 50 5 5-23 10 15-25 3 5z" fill="#ee1118" stroke="#b80d12" strokeWidth="1" />
        <path d="M7 796l2-60-4 1 7-26 6 26-6-1-3 60z" fill="#ee1118" stroke="#b80d12" strokeWidth=".8" />
      </g>
      <path d="M130.500 651.500v15l3.500-3 3 6.500 2.500-1-3-6.500h5z" fill="#fff" stroke="#222" />
    </svg>
  );
}

export default function App() {
  return (
    <div className="relative flex h-screen flex-col overflow-hidden bg-[#f3f3f3] font-['Noto_Sans','Noto_Sans_CJK_SC',sans-serif] text-[12px] text-[#1a1a1a]">
      <TitleBar />
      <nav className="flex h-[22px] shrink-0 items-center gap-6 bg-[#d6d6d6] pl-[11px] text-[13px]">
        {menus.map(([text, letter]) => (
          <button key={text} type="button" className="whitespace-nowrap"><Mnemonic text={text} letter={letter} /></button>
        ))}
      </nav>
      <StandardBar />
      <PropertyBar />
      <main className="flex min-h-0 flex-1">
        <Toolbox />
        <Workspace />
        <Palette />
      </main>
      <StatusBar />
      <Watermark />
      <div className="absolute bottom-[47px] left-[1272px] z-20 flex h-[27px] w-[62px] items-center justify-center gap-1 rounded-[5px] border border-[#777] bg-white text-[12px] text-[#333] shadow-md">
        CH
        <svg width="10" height="12" viewBox="0 0 10 12" fill="none" stroke="#333" aria-hidden="true"><path d="M5 .5c5 2 5 8 1 10-2 1-4 .5-5.500-.5C5 9 7 5 5 .5z" /></svg>
        简
      </div>
      <Annotations />
    </div>
  );
}
